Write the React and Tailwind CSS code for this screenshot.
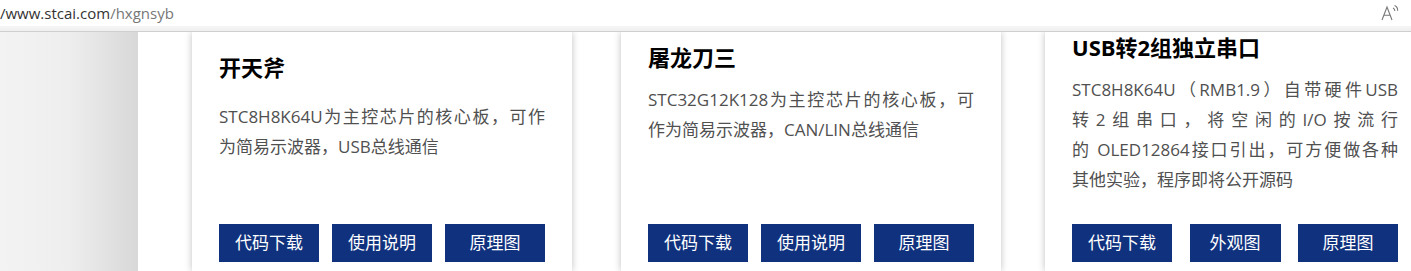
import React from 'react';

const font = { fontFamily: '"Open Sans", "Noto Sans CJK SC", sans-serif' };

// Cards in the carousel; each description is listed line by line so the wraps match
const cards = [
  {
    title: '开天斧',
    pad: 'pt-[20px]',
    gap: 'mt-[20px]',
    ml: 'ml-[54px]',
    lines: ['STC8H8K64U为主控芯片的核心板，可作', '为简易示波器，USB总线通信'],
    buttons: ['代码下载', '使用说明', '原理图'],
  },
  {
    title: '屠龙刀三',
    pad: 'pt-[10px]',
    gap: 'mt-[13px]',
    ml: 'ml-[49px]',
    lines: ['STC32G12K128为主控芯片的核心板，可', '作为简易示波器，CAN/LIN总线通信'],
    buttons: ['代码下载', '使用说明', '原理图'],
  },
  {
    title: 'USB转2组独立串口',
    pad: 'pt-0',
    gap: 'mt-[13px]',
    ml: 'ml-[44px]',
    lines: [
      'STC8H8K64U（RMB1.9）自带硬件USB',
      '转2组串口，将空闲的I/O按流行',
      '的 OLED12864接口引出，可方便做各种',
      '其他实验，程序即将公开源码',
    ],
    buttons: ['代码下载', '外观图', '原理图'],
  },
];

const Card = ({ card }) => (
  <div
    className={`${card.ml} shrink-0 w-[380px] h-full bg-white shadow-[0_0_7px_rgba(0,0,0,0.25)] flex flex-col px-[27px] pb-[9px] ${card.pad}`}
  >
    <h3 className="text-[22px] leading-[30px] font-bold text-black">{card.title}</h3>
    <div className={`${card.gap} text-[17px] leading-[30px] text-[#505050]`}>
      {card.lines.map((line, i) => (
        <div
          key={i}
          className={i < card.lines.length - 1 ? 'text-justify [text-align-last:justify] whitespace-nowrap' : ''}
        >
          {line}
        </div>
      ))}
    </div>
    <div className="mt-auto flex justify-between">
      {card.buttons.map((b) => (
        <button
          key={b}
          className={`${b === '外观图' ? 'w-[91px]' : 'w-[100px]'} h-[38px] bg-[#10317e] text-white text-[17px]`}
        >
          {b}
        </button>
      ))}
    </div>
  </div>
);

export default function App() {
  return (
    <div className="w-[1411px] h-[271px] overflow-hidden bg-white" style={font}>
      {/* barra de direccion */}
      <div className="h-[26px] flex items-center justify-between pr-[9px]">
        <div className="text-[15px] leading-none pt-[1px]">
          <span className="text-[#333]">/www.stcai.com</span>
          <span className="text-[#777]">/hxgnsyb</span>
        </div>
        <svg width="22" height="18" viewBox="0 0 22 18" fill="none" stroke="#777" strokeWidth="1.1">
          <path d="M2 16 L7 3 L12 16 M3.9 11.3 H10.1" />
          <path d="M13 4 a3 3 0 0 1 1.8 3" />
          <path d="M14.6 1.5 a5.2 5.2 0 0 1 3 5.3" />
        </svg>
      </div>
      <div className="h-[5px] bg-gradient-to-b from-[#f6f6f6] to-[#efefef] border-b border-[#cfcfcf] box-content" />

      {/* carrusel */}
      <div className="h-[239px] flex overflow-hidden">
        <div className="w-[138px] shrink-0 h-full bg-gradient-to-r from-[#f3f3f3] via-[#eeeeee] to-[#d8d8d8]" />
        {cards.map((c) => (
          <Card key={c.title} card={c} />
        ))}
      </div>
    </div>
  );
}
